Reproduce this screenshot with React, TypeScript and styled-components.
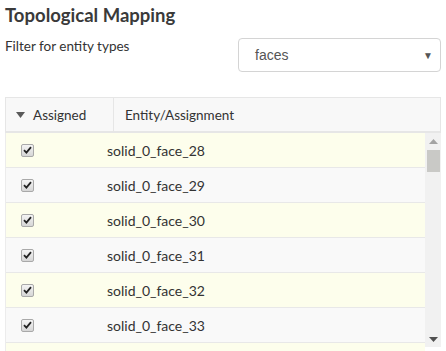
import styled, { createGlobalStyle } from "styled-components";

const GlobalStyle = createGlobalStyle`
  body {
    margin: 0;
    background: #ffffff;
    font-family: Lato, "Open Sans", sans-serif;
    color: #333;
  }
`;

const Page = styled.div`
  width: 446px;
  height: 351px;
  overflow: hidden;
  padding: 0 5px;
  box-sizing: border-box;
`;

const Title = styled.h2`
  margin: 0;
  padding-top: 1px;
  font-size: 18.5px;
  line-height: 29px;
  font-weight: 700;
  color: #3a3a3a;
`;

const FilterRow = styled.div`
  display: flex;
  justify-content: space-between;
  align-items: flex-start;
  margin-top: 8px;
`;

const FilterLabel = styled.div`
  font-size: 13.5px;
  line-height: 16px;
  color: #333;
`;

const SelectBox = styled.div`
  width: 203px;
  height: 34px;
  box-sizing: border-box;
  border: 1px solid #d4d4d4;
  border-radius: 4px;
  display: flex;
  align-items: center;
  justify-content: space-between;
  padding: 0 7px 0 16px;
  font-family: "Liberation Sans", Arial, sans-serif;
  font-size: 14px;
  color: #555;
  background: #fff;
`;

const Caret = styled.span`
  font-size: 10px;
  color: #555;
`;

const Table = styled.div`
  margin-top: 25px;
  width: 436px;
`;

const Header = styled.div`
  display: flex;
  height: 36px;
  box-sizing: border-box;
  border: 1px solid #e6e6e6;
  border-bottom-width: 2px;
  background: #f8f8f8;
`;

const HeadCell = styled.div<{ $width?: number }>`
  display: flex;
  align-items: center;
  gap: 8px;
  ${(p) => (p.$width ? `width: ${p.$width}px; border-right: 1px solid #e6e6e6;` : "flex: 1;")}
  padding-left: ${(p) => (p.$width ? 10 : 11)}px;
  box-sizing: border-box;
  font-size: 13.5px;
  color: #333;
`;

const SortArrow = styled.span`
  display: flex;
  color: #5a5a5a;
`;

const Body = styled.div`
  display: flex;
  height: 230px;
`;

// the next (yellow) row peeks out below the last visible one
const RowList = styled.div`
  flex: 1;
  overflow: hidden;
  border-left: 1px solid #ececec;
  background: #fdfeec;
`;

const Row = styled.div<{ $odd: boolean }>`
  display: flex;
  align-items: center;
  height: 35px;
  box-sizing: border-box;
  border-bottom: 1px solid #e8e8e8;
  background: ${(p) => (p.$odd ? "#fdfeec" : "#f9f9f9")};
`;

const CheckCell = styled.div`
  width: 101px;
  padding-left: 15px;
  box-sizing: border-box;
  display: flex;
  align-items: center;
`;

const Check = styled.span`
  width: 11px;
  height: 11px;
  border: 1px solid #a9a9a9;
  border-radius: 2px;
  background: linear-gradient(#f4f4f4, #d6d6d6);
  display: flex;
  align-items: center;
  justify-content: center;
`;

const NameCell = styled.div`
  font-size: 14px;
  color: #333;
`;

const ScrollTrack = styled.div`
  width: 16px;
  height: 214px;
  background: #f1f1f1;
  display: flex;
  flex-direction: column;
  align-items: center;
`;

const ScrollArrow = styled.div<{ $dark?: boolean }>`
  height: 16px;
  display: flex;
  align-items: center;
  justify-content: center;
  color: ${(p) => (p.$dark ? "#505050" : "#a3a3a3")};
`;

const Thumb = styled.div`
  width: 13px;
  height: 22px;
  background: #c9c9c6;
  margin-top: 1px;
`;

const Spacer = styled.div`
  flex: 1;
`;

const faces = [28, 29, 30, 31, 32, 33];

const CheckMark = () => (
  <svg width="9" height="8" viewBox="0 0 9 8">
    <path d="M1 4.2 L3.4 6.6 L8 1.2" fill="none" stroke="#222" strokeWidth="1.8" />
  </svg>
);

const Tri = ({ up, w = 9, h = 5 }: { up?: boolean; w?: number; h?: number }) => (
  <svg width={w} height={h} viewBox={`0 0 ${w} ${h}`}>
    <path
      d={up ? `M0 ${h} L${w / 2} 0 L${w} ${h} Z` : `M0 0 L${w} 0 L${w / 2} ${h} Z`}
      fill="currentColor"
    />
  </svg>
);

const App = () => {
  return (
    <>
      <GlobalStyle />
      <Page>
        <Title>Topological Mapping</Title>
        <FilterRow>
          <FilterLabel>Filter for entity types</FilterLabel>
          <SelectBox>
            <span>faces</span>
            <Caret>▼</Caret>
          </SelectBox>
        </FilterRow>

        <Table>
          <Header>
            <HeadCell $width={108}>
              <SortArrow>
                <Tri w={9} h={6} />
              </SortArrow>
              Assigned
            </HeadCell>
            <HeadCell>Entity/Assignment</HeadCell>
          </Header>
          <Body>
            <RowList>
              {faces.map((n, i) => (
                <Row key={n} $odd={i % 2 === 0}>
                  <CheckCell>
                    <Check>
                      <CheckMark />
                    </Check>
                  </CheckCell>
                  <NameCell>solid_0_face_{n}</NameCell>
                </Row>
              ))}
            </RowList>
            <ScrollTrack>
              <ScrollArrow>
                <Tri up />
              </ScrollArrow>
              <Thumb />
              <Spacer />
              <ScrollArrow $dark>
                <Tri />
              </ScrollArrow>
            </ScrollTrack>
          </Body>
        </Table>
      </Page>
    </>
  );
};

export default App;
